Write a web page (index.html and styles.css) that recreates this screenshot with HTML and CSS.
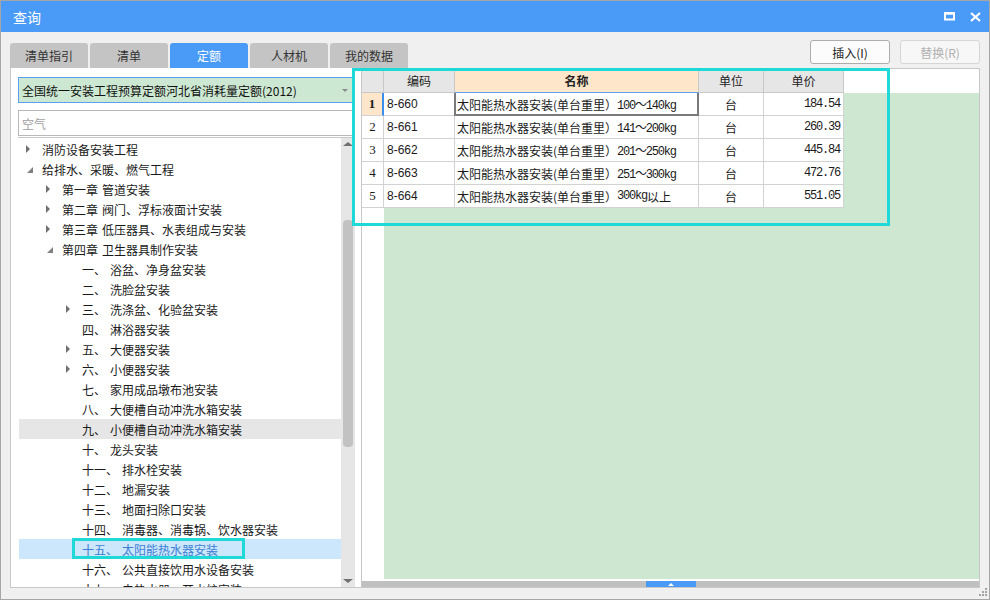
FILE: index.html
```html
<!DOCTYPE html>
<html lang="zh-CN">
<head>
<meta charset="utf-8">
<title>查询</title>
<link rel="stylesheet" href="styles.css">
</head>
<body>
<div class="window">
  <div class="titlebar">
    <span class="title">查询</span>
    <div class="win-btns">
      <svg width="11" height="9" viewBox="0 0 11 9"><rect x="1" y="1.5" width="9" height="6" fill="none" stroke="#fff" stroke-width="2"/><rect x="0" y="0" width="11" height="2.5" fill="#fff"/></svg>
      <svg width="11" height="10" viewBox="0 0 11 10"><path d="M1 1L10 9M10 1L1 9" stroke="#fff" stroke-width="2.2" fill="none"/></svg>
    </div>
  </div>
  <div class="main">
    <div class="left">
      <div class="tabs">
        <div class="tab">清单指引</div>
        <div class="tab">清单</div>
        <div class="tab active">定额</div>
        <div class="tab">人材机</div>
        <div class="tab">我的数据</div>
      </div>
      <div class="panel">
        <div class="combo"><span class="combo-text">全国统一安装工程预算定额河北省消耗量定额(2012)</span><i class="caret"></i></div>
        <div class="search">空气</div>
        <div class="tree">
          <div class="tree-rows">
            <div class="row l0"><i class="tw"><b class="col"></b></i>消防设备安装工程</div>
            <div class="row l0"><i class="tw"><b class="exp"></b></i>给排水、采暖、燃气工程</div>
            <div class="row l1"><i class="tw"><b class="col"></b></i><span class="no">第一章</span>管道安装</div>
            <div class="row l1"><i class="tw"><b class="col"></b></i><span class="no">第二章</span>阀门、浮标液面计安装</div>
            <div class="row l1"><i class="tw"><b class="col"></b></i><span class="no">第三章</span>低压器具、水表组成与安装</div>
            <div class="row l1"><i class="tw"><b class="exp"></b></i><span class="no">第四章</span>卫生器具制作安装</div>
            <div class="row l2"><i class="tw"></i><span class="no">一、</span>浴盆、净身盆安装</div>
            <div class="row l2"><i class="tw"></i><span class="no">二、</span>洗脸盆安装</div>
            <div class="row l2"><i class="tw"><b class="col"></b></i><span class="no">三、</span>洗涤盆、化验盆安装</div>
            <div class="row l2"><i class="tw"></i><span class="no">四、</span>淋浴器安装</div>
            <div class="row l2"><i class="tw"><b class="col"></b></i><span class="no">五、</span>大便器安装</div>
            <div class="row l2"><i class="tw"><b class="col"></b></i><span class="no">六、</span>小便器安装</div>
            <div class="row l2"><i class="tw"></i><span class="no">七、</span>家用成品墩布池安装</div>
            <div class="row l2"><i class="tw"></i><span class="no">八、</span>大便槽自动冲洗水箱安装</div>
            <div class="row l2 hover"><i class="tw"></i><span class="no">九、</span>小便槽自动冲洗水箱安装</div>
            <div class="row l2"><i class="tw"></i><span class="no">十、</span>龙头安装</div>
            <div class="row l2"><i class="tw"></i><span class="no">十一、</span>排水栓安装</div>
            <div class="row l2"><i class="tw"></i><span class="no">十二、</span>地漏安装</div>
            <div class="row l2"><i class="tw"></i><span class="no">十三、</span>地面扫除口安装</div>
            <div class="row l2"><i class="tw"></i><span class="no">十四、</span>消毒器、消毒锅、饮水器安装</div>
            <div class="row l2 selected"><i class="tw"></i><span class="no">十五、</span>太阳能热水器安装<span class="row-mark"></span></div>
            <div class="row l2"><i class="tw"></i><span class="no">十六、</span>公共直接饮用水设备安装</div>
            <div class="row l2"><i class="tw"></i><span class="no">十七、</span>电热水器、开水炉安装</div>
          </div>
          <div class="vscroll">
            <i class="arr-up"></i>
            <div class="vthumb"></div>
            <div class="vspace"></div>
            <i class="arr-down"></i>
          </div>
        </div>
      </div>
    </div>
    <div class="right">
      <div class="toolbar">
        <button class="btn">插入(I)</button>
        <button class="btn disabled">替换(R)</button>
      </div>
      <div class="grid">
        <div class="grid-body">
          <div class="tbl">
            <div class="th rn"></div>
            <div class="th">编码</div>
            <div class="th name">名称</div>
            <div class="th">单位</div>
            <div class="th">单价</div>

            <div class="td rn cur">1</div>
            <div class="td code">8-660</div>
            <div class="td nm curcell">太阳能热水器安装(单台重里） <span class="m">100～140kg</span></div>
            <div class="td unit">台</div>
            <div class="td price"><span class="m">184.54</span></div>

            <div class="td rn">2</div>
            <div class="td code">8-661</div>
            <div class="td nm">太阳能热水器安装(单台重里） <span class="m">141～200kg</span></div>
            <div class="td unit">台</div>
            <div class="td price"><span class="m">260.39</span></div>

            <div class="td rn">3</div>
            <div class="td code">8-662</div>
            <div class="td nm">太阳能热水器安装(单台重里） <span class="m">201～250kg</span></div>
            <div class="td unit">台</div>
            <div class="td price"><span class="m">445.84</span></div>

            <div class="td rn">4</div>
            <div class="td code">8-663</div>
            <div class="td nm">太阳能热水器安装(单台重里） <span class="m">251～300kg</span></div>
            <div class="td unit">台</div>
            <div class="td price"><span class="m">472.76</span></div>

            <div class="td rn">5</div>
            <div class="td code">8-664</div>
            <div class="td nm">太阳能热水器安装(单台重里） <span class="m">300kg</span>以上</div>
            <div class="td unit">台</div>
            <div class="td price"><span class="m">551.05</span></div>
          </div>
        </div>
        <div class="hscroll"><div class="hthumb"><i class="hthumb-arr"></i></div></div>
      </div>
    </div>
  </div>
  <div class="grid-mark"></div>
  <svg class="grip" width="10" height="10" viewBox="0 0 10 10"><g fill="#a3a3a3"><rect x="7" y="0" width="2" height="2"/><rect x="4" y="3" width="2" height="2"/><rect x="7" y="3" width="2" height="2"/><rect x="1" y="6" width="2" height="2"/><rect x="4" y="6" width="2" height="2"/><rect x="7" y="6" width="2" height="2"/></g></svg>
</div>
</body>
</html>
```

FILE: styles.css
```css
* { box-sizing: border-box; }
html, body { margin: 0; padding: 0; }
body {
  width: 990px;
  height: 600px;
  font-family: "Noto Sans CJK SC", "Noto Sans", sans-serif;
  font-size: 12px;
  color: #1a1a1a;
  background: #fff;
}
.window {
  position: relative;
  width: 990px;
  height: 600px;
  border: 1px solid #a6a6a6;
  background: #f0f0f0;
  display: flex;
  flex-direction: column;
  overflow: hidden;
}
.titlebar {
  height: 31px;
  flex: none;
  background: #4a9bf7;
  display: flex;
  align-items: center;
  padding: 0 8px 0 12px;
  color: #fff;
}
.title { font-size: 14px; flex: 1; }
.win-btns { display: flex; align-items: center; gap: 15px; }
.win-btns svg { display: block; }

.main {
  flex: 1;
  display: flex;
  padding: 0 9px 11px 9px;
  min-height: 0;
}
.left {
  width: 351px;
  flex: none;
  display: flex;
  flex-direction: column;
  padding-top: 11px;
}
.tabs {
  display: flex;
  gap: 2px;
  height: 25px;
  flex: none;
  width: max-content;
}
.tab {
  width: 78px;
  flex: none;
  background: #c4c4c4;
  border-radius: 3px 3px 0 0;
  display: flex;
  align-items: center;
  justify-content: center;
  color: #333;
  font-size: 12px;
}
.tab.active { background: #4a9bf7; color: #fff; }

.panel {
  flex: 1;
  min-height: 0;
  background: #fff;
  border-left: 1px solid #c8c8c8;
  border-bottom: 1px solid #c8c8c8;
  padding: 9px 6px 0 7px;
  display: flex;
  flex-direction: column;
}
.combo {
  height: 26px;
  flex: none;
  border: 1px solid #5aa0f0;
  background: #cde8d2;
  display: flex;
  align-items: center;
  padding: 0 6px 0 3px;
  color: #111;
}
.combo-text { flex: 1; white-space: nowrap; }
.caret {
  width: 0; height: 0;
  border-left: 3px solid transparent;
  border-right: 3px solid transparent;
  border-top: 3px solid #8a8a8a;
}
.search {
  height: 26px;
  flex: none;
  margin-top: 7px;
  border: 1px solid #b8b8b8;
  background: #fff;
  color: #a0a0a0;
  padding-left: 3px;
  display: flex;
  align-items: center;
}
.tree {
  flex: 1;
  min-height: 0;
  margin-top: 1px;
  border-top: 1px solid #c8c8c8;
  display: flex;
}
.tree-rows {
  flex: 1;
  min-width: 0;
  overflow: hidden;
  padding: 1px 0 0 1px;
}
.row {
  position: relative;
  height: 20px;
  display: flex;
  align-items: center;
  white-space: nowrap;
  color: #1a1a1a;
}
.row.l0 { padding-left: 7px; }
.row.l1 { padding-left: 27px; }
.row.l2 { padding-left: 47px; }
.row.hover { background: #e6e6e6; }
.row.selected { background: #cce6fb; color: #3a7fd5; }
.tw {
  position: relative;
  width: 16px;
  height: 20px;
  flex: none;
}
.tw .col {
  position: absolute;
  left: 0; top: 6px;
  width: 0; height: 0;
  border-top: 4px solid transparent;
  border-bottom: 4px solid transparent;
  border-left: 4px solid #707070;
}
.tw .exp {
  position: absolute;
  left: 1px; top: 8px;
  width: 0; height: 0;
  border-top: 6px solid transparent;
  border-right: 6px solid #808080;
}
.no { margin-right: 4px; }
.row-mark {
  position: absolute;
  left: 53px;
  top: -1px;
  width: 173px;
  height: 21px;
  border: 3px solid #1fd8d8;
}
.vscroll {
  width: 14px;
  flex: none;
  background: #e6e6e6;
  display: flex;
  flex-direction: column;
  align-items: center;
}
.arr-up {
  margin-top: 4px;
  width: 0; height: 0;
  border-left: 5px solid transparent;
  border-right: 5px solid transparent;
  border-bottom: 4px solid #707070;
}
.vthumb {
  margin-top: 74px;
  width: 10px;
  height: 227px;
  background: #c2c2c2;
  border-radius: 4px;
}
.vspace { flex: 1; }
.arr-down {
  margin-bottom: 4px;
  width: 0; height: 0;
  border-left: 5px solid transparent;
  border-right: 5px solid transparent;
  border-top: 4px solid #707070;
}

.right {
  flex: 1;
  min-width: 0;
  display: flex;
  flex-direction: column;
  padding-top: 8px;
}
.toolbar {
  height: 24px;
  flex: none;
  display: flex;
  justify-content: flex-end;
  gap: 10px;
  margin-bottom: 4px;
}
.btn {
  width: 80px;
  height: 24px;
  border: 1px solid #adadad;
  border-radius: 3px;
  background: #fcfcfc;
  font-family: "Noto Sans CJK SC", "Noto Sans", sans-serif;
  font-size: 12px;
  color: #222;
  padding: 0;
}
.btn.disabled { border-color: #d6d6d6; color: #b0b0b0; background: #f7f7f7; }

.grid {
  flex: 1;
  min-height: 0;
  border: 1px solid #c8c8c8;
  background: #fff;
  display: flex;
  flex-direction: column;
}
.grid-body {
  flex: 1;
  min-height: 0;
  background:
    linear-gradient(#fff, #fff) 0 0 / 100% 24px no-repeat,
    linear-gradient(#fff, #fff) 0 0 / 22px 100% no-repeat,
    #cde7d0;
}
.tbl {
  display: grid;
  grid-template-columns: 22px 71px 244px 65px 80px;
  width: max-content;
  background: #fff;
}
.th, .td {
  border-right: 1px solid #d2d2d2;
  border-bottom: 1px solid #d2d2d2;
  white-space: nowrap;
  overflow: hidden;
  display: flex;
  align-items: center;
}
.th {
  height: 24px;
  background: #e6e6e6;
  justify-content: center;
  color: #222;
  border-color: #c8c8c8;
}
.th.name { background: #fde6c9; font-weight: bold; border-bottom-color: #5b9ef0; }
.td { height: 23px; padding: 0 2px; }
.td.rn {
  justify-content: center;
  font-family: "Liberation Serif", "DejaVu Serif", serif;
  font-size: 13px;
  padding: 0;
}
.td.rn.cur { background: #fde6c9; font-weight: bold; border-right: 2px solid #3b8fef; }
.td.code { font-family: "Liberation Sans", "Noto Sans", sans-serif; padding-left: 3px; }
.td.nm { position: relative; overflow: visible; }
.td.curcell::after {
  content: "";
  position: absolute;
  left: -1px; right: -1px; top: 0; bottom: -1px;
  border: 2px solid #7a7a7a;
  border-top: none;
}
.td.unit { justify-content: center; }
.td.price { justify-content: flex-end; padding-right: 3px; }
.m {
  font-family: "Liberation Mono", "DejaVu Sans Mono", monospace;
  letter-spacing: -1.2px;
}
.hscroll {
  height: 6px;
  flex: none;
  margin-top: 2px;
  background: #c0c0c0;
}
.hthumb {
  margin-left: 284px;
  width: 50px;
  height: 6px;
  background: #4a9bf7;
  display: flex;
  justify-content: center;
  align-items: center;
}
.hthumb-arr {
  width: 0; height: 0;
  border-left: 3px solid transparent;
  border-right: 3px solid transparent;
  border-bottom: 3px solid #fff;
}
.grid-mark {
  position: absolute;
  left: 351px;
  top: 67px;
  width: 538px;
  height: 158px;
  border: 3px solid #1fd8d8;
  pointer-events: none;
}
.grip {
  position: absolute;
  right: 1px;
  bottom: 1px;
}
```
